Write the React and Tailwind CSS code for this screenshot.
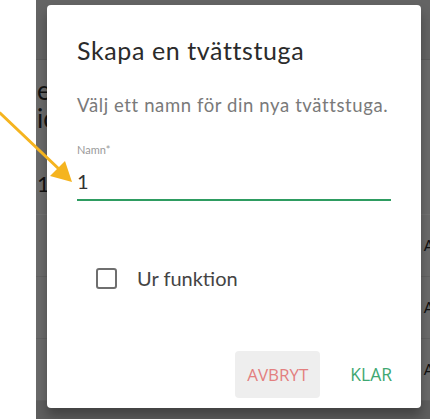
import React, { useState } from 'react'

export default function App() {
  const [checked, setChecked] = useState(false)
  const [name, setName] = useState('1')

  return (
    <div className="relative w-[430px] h-[419px] flex overflow-hidden bg-white" style={{ fontFamily: 'Lato, "Noto Sans", sans-serif' }}>
      {/* white strip outside overlay */}
      <div className="w-[36px] shrink-0 bg-white" />

      {/* page behind the dimmed overlay */}
      <div className="flex-1 flex flex-col bg-[#6b6b6b] text-[#111]">
        <div className="h-[60px] bg-[#646464] border-b border-[#5c5c5c]" />
        <div className="h-[155px] flex flex-col pl-[1px] pt-[16px] border-b border-[#727272]">
          <p className="text-[26px] leading-[28px]">e<br />ic</p>
          <span className="mt-[38px] text-[22px] leading-[28px]">1</span>
        </div>
        <div className="h-[62px] flex justify-end items-center border-b border-[#626262] text-[15px]">
          <span className="translate-x-[4px]">A</span>
        </div>
        <div className="h-[62px] flex justify-end items-center border-b border-[#626262] text-[15px]">
          <span className="translate-x-[4px]">A</span>
        </div>
        <div className="h-[62px] flex justify-end items-center border-b border-[#626262] text-[15px]">
          <span className="translate-x-[4px]">A</span>
        </div>
        <div className="flex-1 bg-[#5e5e5e]" />
      </div>

      {/* dialog */}
      <div className="absolute left-[47px] top-[5px] w-[374px] h-[403px] bg-white rounded-[4px] shadow-[0_8px_12px_rgba(0,0,0,0.3)] flex flex-col px-[30px] pt-[30px]">
        <h2 className="text-[25px] leading-[30px] tracking-[0.6px] text-[#2b2b2b] whitespace-nowrap">Skapa en tvättstuga</h2>
        <p className="mt-[28px] text-[18.5px] leading-[24px] tracking-[0.6px] text-[#7a7a7a] whitespace-nowrap">Välj ett namn för din nya tvättstuga.</p>

        <label className="mt-[26px] block">
          <span className="block text-[11px] leading-[14px] text-[#9a9a9a]">Namn*</span>
          <input
            value={name}
            onChange={(e) => setName(e.target.value)}
            className="mt-[12px] w-full text-[20px] leading-[24px] text-[#333] outline-none border-b-2 border-[#2e9c61] pb-[6px] caret-black"
            style={{ fontFamily: 'Lato, sans-serif' }}
          />
        </label>

        <button
          onClick={() => setChecked(!checked)}
          className="mt-[65px] ml-[19px] flex items-center gap-[20px] text-left leading-[24px]"
        >
          <span className="w-[21px] h-[21px] rounded-[3px] border-2 border-[#6f6f6f] flex items-center justify-center text-[14px] text-[#6f6f6f]">
            {checked ? '✓' : ''}
          </span>
          <span className="text-[20px] text-[#444]">Ur funktion</span>
        </button>

        <div className="mt-auto mb-[10px] flex justify-end items-center gap-[30px] mr-[-1px]">
          <button className="h-[47px] w-[85px] rounded-[4px] bg-[#eeeeee] text-[17px] text-[#e37f7f]" style={{ fontFamily: '"Open Sans", sans-serif' }}>
            AVBRYT
          </button>
          <button className="h-[47px] text-[17.5px] text-[#3fa872]" style={{ fontFamily: '"Open Sans", sans-serif' }}>
            KLAR
          </button>
        </div>
      </div>

      {/* annotation arrow */}
      <svg className="absolute left-0 top-0 pointer-events-none" width="90" height="200" viewBox="0 0 90 200">
        <line x1="0" y1="113" x2="60" y2="170" stroke="#f5b41f" strokeWidth="3" strokeLinecap="round" />
        <polygon points="72,182 50,176 65,161" fill="#f5b41f" />
      </svg>
    </div>
  )
}
